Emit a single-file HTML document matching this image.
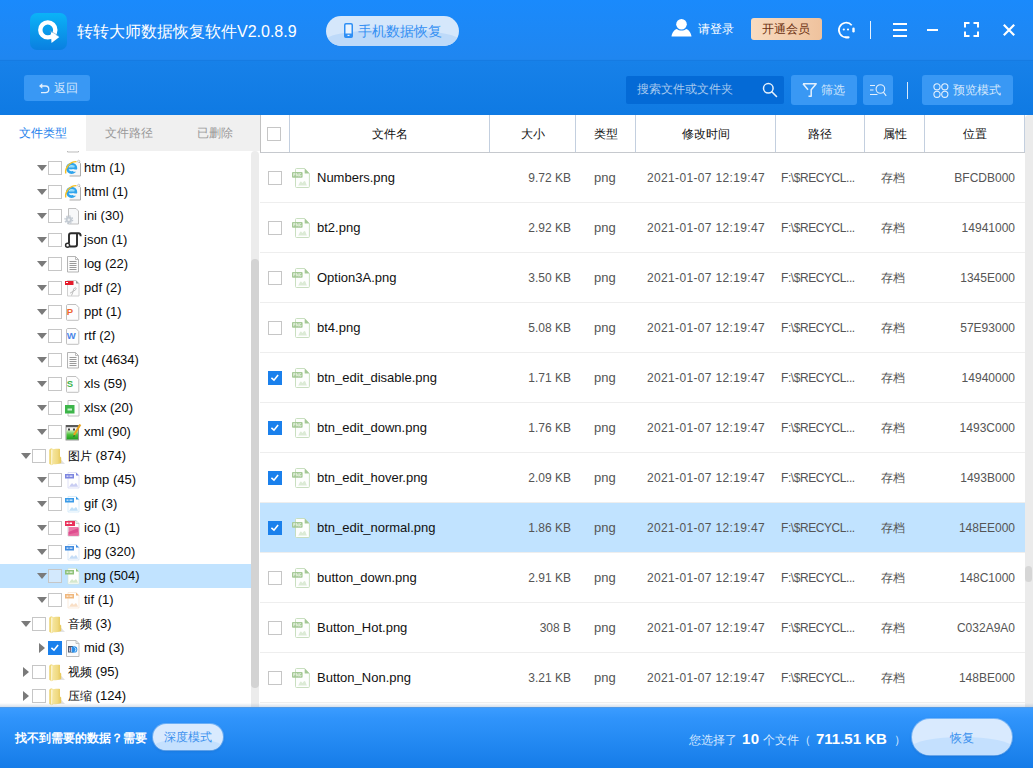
<!DOCTYPE html>
<html lang="zh">
<head>
<meta charset="utf-8">
<title>转转大师数据恢复软件</title>
<style>
*{box-sizing:border-box;margin:0;padding:0}
html,body{width:1033px;height:768px;overflow:hidden;background:#fff}
body{position:relative;font-family:"Liberation Sans",sans-serif;font-size:12px;color:#222}
svg{position:absolute;overflow:visible}
i{font-style:normal}
#hdr{position:absolute;left:0;top:0;width:1033px;height:115px;background:linear-gradient(#1a8afc 0px,#1f86f0 59px,#1781e9 61px,#0f7ae3 115px)}
#hdr .sep{position:absolute;left:0;top:60px;width:1033px;height:1px;background:#167be2}
#logo{position:absolute;left:30px;top:13px;width:37px;height:37px;border-radius:7px;background:linear-gradient(#0bb3f7,#0a7fe0)}
#title{position:absolute;left:77px;top:20px;font-size:16px;color:#fff;white-space:nowrap;line-height:24px}
#phone{position:absolute;left:326px;top:16px;width:133px;height:30px;border-radius:15px;background:#bcd9f8;color:#3590f3;font-size:14px;line-height:30px;white-space:nowrap;overflow:hidden}
#phone{background:#d5e7fb}#phone:before{content:"";position:absolute;left:0;top:14px;width:133px;height:20px;border-radius:60px 60px 0 0/10px 10px 0 0;background:#bedaf9}
#phone span{position:absolute;left:32px;top:0}
#login{position:absolute;left:698px;top:19px;font-size:12px;color:#fff;line-height:20px;white-space:nowrap}
#vip{position:absolute;left:751px;top:18px;width:71px;height:22px;border-radius:3px;background:linear-gradient(90deg,#f8dcc1,#efc29d);color:#6a2f10;font-size:12px;line-height:22px;text-align:center;white-space:nowrap;padding-right:2px}
.tbtn{position:absolute;top:75px;height:30px;border-radius:3px;background:#3998f4;color:#d3e7fc;font-size:12px;line-height:30px;white-space:nowrap}
.tbtn span{position:absolute;top:0}
#search{position:absolute;left:626px;top:76px;width:158px;height:28px;border-radius:2px;background:#046ad6;color:#a5c8ef;font-size:12px;line-height:27px;padding-left:11px;white-space:nowrap}
/* left panel */
#tabs{position:absolute;left:0;top:115px;width:260px;height:36px;background:#f0f0f0}
#tabs div{position:absolute;top:0;height:36px;line-height:36px;font-size:12px;color:#999;text-align:center;white-space:nowrap}
#tabs .on{background:#fff;color:#1e82ec}
#tree{position:absolute;left:0;top:151px;width:251px;height:556px;overflow:hidden;background:#fff}
.tr{position:absolute;left:0;width:251px;height:24px;line-height:24px;font-size:13px;color:#0a0a0a;white-space:nowrap}
.tr b{font-weight:normal;font-size:12px}
.tr.sel{background:#c1e3ff}
.tr .ar{position:absolute;top:9px;width:0;height:0;border-left:5px solid transparent;border-right:5px solid transparent;border-top:6px solid #7a7a7a}
.tr .ar.r{top:7px;border-top:5px solid transparent;border-bottom:5px solid transparent;border-left:6px solid #7a7a7a;border-right:0}
.tr .cb{position:absolute;top:5px;width:14px;height:14px;border:1px solid #c6c6c6;background:#fff}
.tr.sel .cb{background:#d3e9fd}
.tr .cb.on{background:#1a80ec;border-color:#1a80ec}
.tr .ic{position:absolute;top:3px;width:16px;height:18px}
.tr .tx{position:absolute;top:0}
#lsb{position:absolute;left:251px;top:151px;width:8px;height:556px;background:#ececec;border-radius:4px 4px 0 0}
#lsb i{position:absolute;left:0;top:108px;width:8px;height:429px;border-radius:4px;background:#d3d3d3}
/* table */
#th{position:absolute;left:260px;top:115px;width:765px;height:38px;background:#fff;border-bottom:1px solid #c6c9ce;border-left:1px solid #c2c2c2}
#th div{position:absolute;top:0;height:37px;line-height:38px;text-align:center;font-size:12px;color:#111;border-right:1px solid #c3cfdf;white-space:nowrap}
.hcb{position:absolute;left:6px;top:12px;width:14px;height:14px;border:1px solid #c6c6c6;background:#fff}
.row{position:absolute;left:260px;width:765px;height:50px;border-bottom:1px solid #eeeeee;font-size:12px;color:#555;line-height:50px;white-space:nowrap}
.row.sel{background:#c1e3ff}
.row .cb{position:absolute;left:8px;top:18px;width:14px;height:14px;border:1px solid #c6c6c6;background:#fff}
.row .cb.on{background:#1a80ec;border-color:#1a80ec}
.row .fi{position:absolute;left:32px;top:15px;width:18px;height:20px}
.row span{position:absolute;top:0}
.row .nm{left:57px;color:#111;font-size:13px}
.row .sz{right:454px}
.row .ty{left:334px;font-size:13px}
.row .tm{left:387px;letter-spacing:.35px}
.row .pa{left:521px;letter-spacing:-.43px}
.row .at{left:621px}
.row .po{right:10px}
#rsb{position:absolute;left:1025px;top:115px;width:8px;height:592px;background:#ebebeb;border-radius:4px 0 0 0}
#rsb i{position:absolute;left:0;top:451px;width:7px;height:16px;border-radius:3.500px;background:#d6d6d6}
/* footer */
#ftr{position:absolute;left:0;top:707px;width:1033px;height:61px;background:linear-gradient(#3b9cff 1px,#3094fb 11px,#2389f2 35px,#157ce8 61px)}#ftr:before{content:"";position:absolute;left:0;top:-4px;width:1033px;height:5px;background:linear-gradient(rgba(120,150,185,0),rgba(120,150,185,.38))}
#ftr .q{position:absolute;left:15px;top:21px;font-size:12px;font-weight:bold;color:#fff;line-height:20px;white-space:nowrap}
#deep{position:absolute;left:153px;top:17px;width:70px;height:26px;border-radius:13px;background:#d9eafe;box-shadow:0 0 0 1px rgba(255,255,255,.3),0 1px 3px rgba(0,60,140,.25);color:#3d92ee;font-size:12px;line-height:26px;text-align:center;white-space:nowrap;overflow:hidden}#deep:before{content:"";position:absolute;left:0;top:15px;width:70px;height:20px;border-radius:35px 35px 0 0/8px 8px 0 0;background:#c4e0fe}#deep span{position:relative}
#sel span{position:absolute;top:22px;font-size:12px;color:#d6e8ff;line-height:22px;white-space:nowrap}
#sel b{color:#fff;font-size:15px;letter-spacing:.5px}
#rec{position:absolute;left:912px;top:12px;width:100px;height:36px;border-radius:18px;background:#d9eafe;box-shadow:0 0 0 1px rgba(255,255,255,.35),0 1px 3px rgba(0,60,140,.25);color:#3d92ee;font-size:12px;line-height:38px;text-align:center;white-space:nowrap;overflow:hidden}
#rec:before{content:"";position:absolute;left:0;top:18px;width:100px;height:24px;border-radius:50px 50px 0 0/10px 10px 0 0;background:#c4e0fe}
#rec span{position:relative}
</style>
</head>
<body>
<svg width="0" height="0" style="left:0;top:0"><defs><linearGradient id="gx" x1="0" y1="0" x2="0" y2="1"><stop offset="0" stop-color="#d9f0c8"/><stop offset=".5" stop-color="#4cc23a"/><stop offset="1" stop-color="#1f9a20"/></linearGradient><linearGradient id="gf" x1="0" y1="0" x2="1" y2="0"><stop offset="0" stop-color="#f6e7a2"/><stop offset=".6" stop-color="#f0da82"/><stop offset="1" stop-color="#e6c655"/></linearGradient></defs></svg>
<div id="hdr">
  <div class="sep"></div>
  <div id="logo"><svg style="left:0;top:0" width="37" height="37" viewBox="0 0 37 37"><circle cx="17.800" cy="16.900" r="7.500" fill="none" stroke="#fff" stroke-width="4.400"/><path d="M19.800 17.700L28.300 22.700" stroke="#7fa9cc" stroke-width="1.100" opacity=".6"/><path d="M20.900 19.100L29.400 24.100 21.500 30z" fill="#fff"/></svg></div>
  <div id="title">转转大师数据恢复软件V2.0.8.9</div>
  <div id="phone"><svg style="left:18px;top:7px" width="9" height="15" viewBox="0 0 9 15"><rect x=".75" y=".75" width="7.500" height="13.500" rx="1.200" fill="#eaf3fd" stroke="#2f8ff5" stroke-width="1.500"/><rect x=".5" y="10.500" width="8" height="4" rx="1" fill="#2f8ff5"/><rect x="3.500" y="11.800" width="2" height="1.200" fill="#eaf3fd"/></svg><span>手机数据恢复</span></div>
  <svg style="left:671px;top:19px" width="21" height="18" viewBox="0 0 21 18"><circle cx="10.500" cy="5.300" r="5.300" fill="#fff"/><path d="M.5 17.500C1 13.500 3.500 10.500 6 10c2 2 7 2 9 0 2.500.5 5 3.500 5.500 7.500z" fill="#fff"/></svg>
  <div id="login">请登录</div>
  <div id="vip">开通会员</div>
  <svg style="left:837px;top:21px" width="19" height="18" viewBox="0 0 19 18"><path d="M14.700 4.200A7.300 7.300 0 1 0 9 16.300" fill="none" stroke="#fff" stroke-width="1.700"/><path d="M9 16.300h2.500" stroke="#fff" stroke-width="2.200" stroke-linecap="round"/><rect x="15.300" y="6.500" width="2.400" height="5" rx="1.200" fill="#fff"/><circle cx="6.800" cy="8.500" r="1.100" fill="#fff"/><circle cx="11" cy="8.500" r="1.100" fill="#fff"/></svg>
  <div style="position:absolute;left:870px;top:21px;width:1px;height:18px;background:#e8f2fd"></div>
  <svg style="left:893px;top:23px" width="14" height="14" viewBox="0 0 14 14"><path d="M0 1h14M0 7h14M0 13h14" stroke="#fff" stroke-width="2"/></svg>
  <div style="position:absolute;left:927px;top:29px;width:11px;height:2px;background:#fff"></div>
  <svg style="left:964px;top:22px" width="15" height="15" viewBox="0 0 15 15"><path d="M1 5.500V1h4.500M9.500 1H14v4.500M14 9.500V14H9.500M5.500 14H1V9.500" fill="none" stroke="#fff" stroke-width="2"/></svg>
  <svg style="left:1003px;top:24px" width="12" height="12" viewBox="0 0 12 12"><path d="M.8.800l10.400 10.400M11.200.800L.8 11.200" stroke="#fff" stroke-width="2.200"/></svg>

  <div class="tbtn" id="back" style="left:24px;width:66px;height:26px;line-height:26px"><svg style="left:15px;top:8px" width="11" height="11" viewBox="0 0 11 11"><path d="M1.500 3h5a3.300 3.300 0 0 1 0 6.600H2" fill="none" stroke="#e3f0fd" stroke-width="1.300"/><path d="M0 3L3.300 .3v5.400z" fill="#e3f0fd"/></svg><span style="left:30px">返回</span></div>
  <div id="search">搜索文件或文件夹<svg style="left:136px;top:6px" width="16" height="16" viewBox="0 0 16 16"><circle cx="6.300" cy="6.300" r="4.800" fill="none" stroke="#e6f1fc" stroke-width="1.500"/><path d="M9.800 9.800l4.700 4.700" stroke="#e6f1fc" stroke-width="1.600" stroke-linecap="round"/></svg></div>
  <div class="tbtn" style="left:791px;width:66px"><svg style="left:11px;top:8px" width="15" height="14" viewBox="0 0 15 14"><path d="M1 .8h13.200L9.200 6.800v6.400H6.500M1 .8l5 6" fill="none" stroke="#e3f0fd" stroke-width="1.500" stroke-linejoin="round"/></svg><span style="left:30px">筛选</span></div>
  <div class="tbtn" style="left:863px;width:30px"><svg style="left:7px;top:9px" width="17" height="13" viewBox="0 0 17 13"><path d="M0 1.500h5M0 6h3.500M0 10.500h7.500" stroke="#e3f0fd" stroke-width="1.100"/><circle cx="10.400" cy="5" r="4.300" fill="none" stroke="#e3f0fd" stroke-width="1.100"/><path d="M13.400 8.200l2.800 3.600" stroke="#e3f0fd" stroke-width="1.100"/></svg></div>
  <div style="position:absolute;left:907px;top:82px;width:1px;height:17px;background:#d8e9fb"></div>
  <div class="tbtn" style="left:922px;width:91px"><svg style="left:11px;top:8px" width="16" height="15" viewBox="0 0 16 15"><g fill="none" stroke="#e3f0fd" stroke-width="1.100"><circle cx="4" cy="3.800" r="3.100"/><circle cx="11.800" cy="3.800" r="3.100"/><circle cx="4" cy="11.300" r="3.100"/><circle cx="11.800" cy="11.300" r="3.100"/></g></svg><span style="left:31px">预览模式</span></div>
</div>
<div id="tabs">
  <div class="on" style="left:0;width:86px">文件类型</div>
  <div style="left:86px;width:86px">文件路径</div>
  <div style="left:172px;width:86px">已删除</div>
</div>
<div id="tree">
<div class="tr" style="top:-19px"><span class="ic" style="left:65px"></span><svg class="ic" style="left:65px" viewBox="0 0 16 18"><path d="M2.500 1.500H10.500l3 3V17h-11z" fill="#fcfcfc" stroke="#b4b4b4" stroke-width=".9"/><path d="M10.500 1.500v3h3" fill="none" stroke="#b4b4b4" stroke-width=".8"/></svg></div>
<div class="tr" style="top:5px"><i class="ar" style="left:37px"></i><i class="cb" style="left:48px"></i><svg class="ic" style="left:65px" viewBox="0 0 16 18"><path d="M5 2.500H13.200L15.500 4.800V17H5z" fill="#f6f6f6"/><path d="M13.200 2l2.300 2.500V17H4.500" fill="none" stroke="#a3a3a3" stroke-width=".9"/><circle cx="13.700" cy="2.300" r="1.100" fill="#fff" stroke="#aaa" stroke-width=".6"/><circle cx="6.600" cy="9.300" r="4.300" fill="#eaf7fe" stroke="#2fa4ec" stroke-width="2.700"/><rect x="2.500" y="8.300" width="9.500" height="2" fill="#2fa4ec"/><path d="M7 10.400h6v2.300H8.500z" fill="#f6f6f6"/><path d="M5 6.500h4.500v1.600H4.300z" fill="#8fdcfb"/><path d="M.7 14.500C-.2 9.500 4.500 2.300 11.500 2.600" fill="none" stroke="#f6c026" stroke-width="1.400"/></svg><span class="tx" style="left:84px">htm (1)</span></div>
<div class="tr" style="top:29px"><i class="ar" style="left:37px"></i><i class="cb" style="left:48px"></i><svg class="ic" style="left:65px" viewBox="0 0 16 18"><path d="M5 2.500H13.200L15.500 4.800V17H5z" fill="#f6f6f6"/><path d="M13.200 2l2.300 2.500V17H4.500" fill="none" stroke="#a3a3a3" stroke-width=".9"/><circle cx="13.700" cy="2.300" r="1.100" fill="#fff" stroke="#aaa" stroke-width=".6"/><circle cx="6.600" cy="9.300" r="4.300" fill="#eaf7fe" stroke="#2fa4ec" stroke-width="2.700"/><rect x="2.500" y="8.300" width="9.500" height="2" fill="#2fa4ec"/><path d="M7 10.400h6v2.300H8.500z" fill="#f6f6f6"/><path d="M5 6.500h4.500v1.600H4.300z" fill="#8fdcfb"/><path d="M.7 14.500C-.2 9.500 4.500 2.300 11.500 2.600" fill="none" stroke="#f6c026" stroke-width="1.400"/></svg><span class="tx" style="left:84px">html (1)</span></div>
<div class="tr" style="top:53px"><i class="ar" style="left:37px"></i><i class="cb" style="left:48px"></i><svg class="ic" style="left:65px" viewBox="0 0 16 18"><path d="M3.500 1.500H11l2.500 2.500V17H3.500z" fill="#f7f8f9" stroke="#b9b9b9" stroke-width=".9"/><circle cx="3.800" cy="12.800" r="3.200" fill="#c3cad2"/><circle cx="3.800" cy="12.800" r="3.900" fill="none" stroke="#c3cad2" stroke-width="1.200" stroke-dasharray="1.500 1.550"/><circle cx="3.800" cy="12.800" r="1.200" fill="#eef0f2"/></svg><span class="tx" style="left:84px">ini (30)</span></div>
<div class="tr" style="top:77px"><i class="ar" style="left:37px"></i><i class="cb" style="left:48px"></i><svg class="ic" style="left:65px" viewBox="0 0 16 18"><path d="M4 12V4.200c0-1.500 .8-2 2-2H13.500c1.800 0 2.200 1.200 2.200 3" fill="none" stroke="#2b2b2b" stroke-width="1.900"/><path d="M12 3v10.500c0 1.500-.8 2-2 2H4.500" fill="none" stroke="#2b2b2b" stroke-width="1.900"/><circle cx="2.600" cy="14.300" r="2" fill="#fff" stroke="#2b2b2b" stroke-width="1.500"/><rect x="5.200" y="4" width="5.600" height="9.500" fill="#fff"/></svg><span class="tx" style="left:84px">json (1)</span></div>
<div class="tr" style="top:101px"><i class="ar" style="left:37px"></i><i class="cb" style="left:48px"></i><svg class="ic" style="left:65px" viewBox="0 0 16 18"><path d="M2.500 1.500H10.500l3 3V17h-11z" fill="#fcfcfc" stroke="#ababab" stroke-width=".9"/><path d="M10.500 1.500v3h3" fill="none" stroke="#ababab" stroke-width=".8"/><path d="M4.500 6.500h7M4.500 8.500h7M4.500 10.500h7M4.500 12.500h7M4.500 14.500h7" stroke="#8e8e8e" stroke-width=".9"/></svg><span class="tx" style="left:84px">log (22)</span></div>
<div class="tr" style="top:125px"><i class="ar" style="left:37px"></i><i class="cb" style="left:48px"></i><svg class="ic" style="left:65px" viewBox="0 0 16 18"><path d="M2.500 1.500H11l3 3V17H2.500z" fill="#fcfcfc" stroke="#c4c4c4" stroke-width=".8"/><path d="M11 1.500l3 3h-3z" fill="#9a9a9a"/><rect x="0" y="2" width="8.500" height="4" fill="#e31b2b"/><rect x="1" y="3" width="2" height="1" fill="#fff"/><path d="M6.500 16.500c2-3.500 1.500-6.500 3-7.500s2.500 1 .5 2.200c-1.500 1-3.500 1.800-5 3" fill="none" stroke="#b5b5b5" stroke-width=".9"/></svg><span class="tx" style="left:84px">pdf (2)</span></div>
<div class="tr" style="top:149px"><i class="ar" style="left:37px"></i><i class="cb" style="left:48px"></i><svg class="ic" style="left:65px" viewBox="0 0 16 18"><path d="M1.500 3V16.500c0 .5.300 .8.800 .8H13c.5 0 .8-.3.800-.8V4.500L11 1.500H3c-1 0-1.500.5-1.500 1.500z" fill="#fdfdfd" stroke="#b9b9b9" stroke-width=".9"/><text x="1.800" y="12" font-family="Liberation Sans,sans-serif" font-weight="bold" font-size="9.500" fill="#f0642f">P</text></svg><span class="tx" style="left:84px">ppt (1)</span></div>
<div class="tr" style="top:173px"><i class="ar" style="left:37px"></i><i class="cb" style="left:48px"></i><svg class="ic" style="left:65px" viewBox="0 0 16 18"><path d="M1.500 3V16.500c0 .5.300 .8.800 .8H13c.5 0 .8-.3.800-.8V4.500L11 1.500H3c-1 0-1.500.5-1.500 1.500z" fill="#fdfdfd" stroke="#b9b9b9" stroke-width=".9"/><text x="1.800" y="12" font-family="Liberation Sans,sans-serif" font-weight="bold" font-size="9.500" fill="#4a86e8">W</text></svg><span class="tx" style="left:84px">rtf (2)</span></div>
<div class="tr" style="top:197px"><i class="ar" style="left:37px"></i><i class="cb" style="left:48px"></i><svg class="ic" style="left:65px" viewBox="0 0 16 18"><path d="M2.500 1.500H10.500l3 3V17h-11z" fill="#fcfcfc" stroke="#ababab" stroke-width=".9"/><path d="M10.500 1.500v3h3" fill="none" stroke="#ababab" stroke-width=".8"/><path d="M4.500 6.500h7M4.500 8.500h7M4.500 10.500h7M4.500 12.500h7M4.500 14.500h7" stroke="#8e8e8e" stroke-width=".9"/></svg><span class="tx" style="left:84px">txt (4634)</span></div>
<div class="tr" style="top:221px"><i class="ar" style="left:37px"></i><i class="cb" style="left:48px"></i><svg class="ic" style="left:65px" viewBox="0 0 16 18"><path d="M1.500 3V16.500c0 .5.300 .8.800 .8H13c.5 0 .8-.3.800-.8V4.500L11 1.500H3c-1 0-1.500.5-1.500 1.500z" fill="#fdfdfd" stroke="#b9b9b9" stroke-width=".9"/><text x="1.800" y="12" font-family="Liberation Sans,sans-serif" font-weight="bold" font-size="9.500" fill="#3cb44a">S</text></svg><span class="tx" style="left:84px">xls (59)</span></div>
<div class="tr" style="top:245px"><i class="ar" style="left:37px"></i><i class="cb" style="left:48px"></i><svg class="ic" style="left:65px" viewBox="0 0 16 18"><path d="M3 1.500H11l3 3V17H3z" fill="#fdfdfd" stroke="#b9b9b9" stroke-width=".9"/><rect x="0" y="6" width="9.500" height="8.500" fill="#3db54a"/><path d="M2.500 9.500h4.500v2H2.500z" fill="#c8f0cc"/></svg><span class="tx" style="left:84px">xlsx (20)</span></div>
<div class="tr" style="top:269px"><i class="ar" style="left:37px"></i><i class="cb" style="left:48px"></i><svg class="ic" style="left:65px" viewBox="0 0 16 18"><rect x="1" y="2.500" width="12.500" height="14.500" fill="#f4f4f4" stroke="#8a8a8a" stroke-width=".9"/><rect x="1.500" y="7" width="11.500" height="9.500" fill="url(#gx)"/><rect x="1" y="2" width="12.500" height="2.200" fill="#5a5a5a"/><rect x="3" y="5.500" width="2" height="2" fill="#444"/><rect x="8" y="5.500" width="2" height="2" fill="#444"/><path d="M15.300 1.500L9 12" stroke="#eaa51f" stroke-width="2.200"/><path d="M9 12l-.8 2 1.800-1z" fill="#333"/></svg><span class="tx" style="left:84px">xml (90)</span></div>
<div class="tr" style="top:293px"><i class="ar" style="left:21px"></i><i class="cb" style="left:32px"></i><svg class="ic" style="width:18px;left:48px" viewBox="0 0 18 18"><path d="M12.500 12l4.500 5H9z" fill="#cfcfcf" opacity=".6"/><path d="M1.200 2.800L3 1.200l2 .8V17.500l-1.500 .8-2.300-1.500z" fill="#efd87a"/><path d="M3.800 2.500c1-.6 7-.9 8.200-.5V9.500l1.200 1V16c-1.500 .8-6.500 1.500-8.200 1.300z" fill="url(#gf)"/><path d="M3.800 2.500v15.200" stroke="#fffbe8" stroke-width="1.100"/></svg><span class="tx" style="left:68px"><b>图片</b> (874)</span></div>
<div class="tr" style="top:317px"><i class="ar" style="left:37px"></i><i class="cb" style="left:48px"></i><svg class="ic" style="left:65px" viewBox="0 0 16 18"><path d="M3 1.500H11l3 3V17H3z" fill="#fefefe" stroke="#c9cdf2" stroke-width=".6"/><path d="M11 1.500l3 3h-3z" fill="#7d86e0"/><rect x="0" y="3" width="9" height="4.500" fill="#7d86e0"/><rect x="1.500" y="4.400" width="2" height="1.600" fill="#fff" opacity=".65"/><rect x="4.500" y="4.400" width="3" height="1.600" fill="#fff" opacity=".65"/><path d="M4 15.800c1-.5 1.500-3 3-3.500 1 .2 1 1.500 2 1.500 .8-.8 1.200-1.500 2-1.500s1.500 2.500 2 3.500z" fill="#c9cdf2"/></svg><span class="tx" style="left:84px">bmp (45)</span></div>
<div class="tr" style="top:341px"><i class="ar" style="left:37px"></i><i class="cb" style="left:48px"></i><svg class="ic" style="left:65px" viewBox="0 0 16 18"><path d="M3 1.500H11l3 3V17H3z" fill="#fefefe" stroke="#bfe0f8" stroke-width=".6"/><path d="M11 1.500l3 3h-3z" fill="#3a9be8"/><rect x="0" y="3" width="9" height="4.500" fill="#3a9be8"/><rect x="1.500" y="4.400" width="2" height="1.600" fill="#fff" opacity=".65"/><rect x="4.500" y="4.400" width="3" height="1.600" fill="#fff" opacity=".65"/><path d="M4 15.800c1-.5 1.500-3 3-3.500 1 .2 1 1.500 2 1.500 .8-.8 1.200-1.500 2-1.500s1.500 2.500 2 3.500z" fill="#bfe0f8"/></svg><span class="tx" style="left:84px">gif (3)</span></div>
<div class="tr" style="top:365px"><i class="ar" style="left:37px"></i><i class="cb" style="left:48px"></i><svg class="ic" style="left:65px" viewBox="0 0 16 18"><path d="M3 1.500H11l3 3V17H3z" fill="#fdfdfd" stroke="#c8c8c8" stroke-width=".8"/><path d="M11 1.500v3h3" fill="none" stroke="#bbb" stroke-width=".7"/><rect x="0" y="2" width="10" height="5" fill="#e9305a"/><rect x="1.500" y="3.500" width="2" height="1.500" fill="#fff"/><rect x="4.500" y="3.500" width="2.500" height="1.500" fill="#fff"/><path d="M3.500 8h10v8.500h-10z" fill="#ec7aa8"/><path d="M3.500 13l10-4V16.500h-10z" fill="#de4e8f"/><path d="M3.500 15.500l10-2.500v3.500h-10z" fill="#e86ba0"/></svg><span class="tx" style="left:84px">ico (1)</span></div>
<div class="tr" style="top:389px"><i class="ar" style="left:37px"></i><i class="cb" style="left:48px"></i><svg class="ic" style="left:65px" viewBox="0 0 16 18"><path d="M3 1.500H11l3 3V17H3z" fill="#fefefe" stroke="#c4dcf6" stroke-width=".6"/><path d="M11 1.500l3 3h-3z" fill="#3f8be0"/><rect x="0" y="3" width="9" height="4.500" fill="#3f8be0"/><rect x="1.500" y="4.400" width="2" height="1.600" fill="#fff" opacity=".65"/><rect x="4.500" y="4.400" width="3" height="1.600" fill="#fff" opacity=".65"/><path d="M4 15.800c1-.5 1.500-3 3-3.500 1 .2 1 1.500 2 1.500 .8-.8 1.200-1.500 2-1.500s1.500 2.500 2 3.500z" fill="#c4dcf6"/></svg><span class="tx" style="left:84px">jpg (320)</span></div>
<div class="tr sel" style="top:413px"><i class="ar" style="left:37px"></i><i class="cb" style="left:48px"></i><svg class="ic" style="left:65px" viewBox="0 0 16 18"><path d="M3 1.500H11l3 3V17H3z" fill="#fefefe" stroke="#d5e8cd" stroke-width=".6"/><path d="M11 1.500l3 3h-3z" fill="#8fc27a"/><rect x="0" y="3" width="9" height="4.500" fill="#8fc27a"/><rect x="1.500" y="4.400" width="2" height="1.600" fill="#fff" opacity=".65"/><rect x="4.500" y="4.400" width="3" height="1.600" fill="#fff" opacity=".65"/><path d="M4 15.800c1-.5 1.500-3 3-3.500 1 .2 1 1.500 2 1.500 .8-.8 1.200-1.500 2-1.500s1.500 2.500 2 3.500z" fill="#d5e8cd"/></svg><span class="tx" style="left:84px">png (504)</span></div>
<div class="tr" style="top:437px"><i class="ar" style="left:37px"></i><i class="cb" style="left:48px"></i><svg class="ic" style="left:65px" viewBox="0 0 16 18"><path d="M3 1.500H11l3 3V17H3z" fill="#fefefe" stroke="#f9dfc6" stroke-width=".6"/><path d="M11 1.500l3 3h-3z" fill="#f0b77c"/><rect x="0" y="3" width="9" height="4.500" fill="#f0b77c"/><rect x="1.500" y="4.400" width="2" height="1.600" fill="#fff" opacity=".65"/><rect x="4.500" y="4.400" width="3" height="1.600" fill="#fff" opacity=".65"/><path d="M4 15.800c1-.5 1.500-3 3-3.500 1 .2 1 1.500 2 1.500 .8-.8 1.200-1.500 2-1.500s1.500 2.500 2 3.500z" fill="#f9dfc6"/></svg><span class="tx" style="left:84px">tif (1)</span></div>
<div class="tr" style="top:461px"><i class="ar" style="left:21px"></i><i class="cb" style="left:32px"></i><svg class="ic" style="width:18px;left:48px" viewBox="0 0 18 18"><path d="M12.500 12l4.500 5H9z" fill="#cfcfcf" opacity=".6"/><path d="M1.200 2.800L3 1.200l2 .8V17.500l-1.500 .8-2.300-1.500z" fill="#efd87a"/><path d="M3.800 2.500c1-.6 7-.9 8.200-.5V9.500l1.200 1V16c-1.500 .8-6.500 1.500-8.200 1.300z" fill="url(#gf)"/><path d="M3.800 2.500v15.200" stroke="#fffbe8" stroke-width="1.100"/></svg><span class="tx" style="left:68px"><b>音频</b> (3)</span></div>
<div class="tr" style="top:485px"><i class="ar r" style="left:39px"></i><i class="cb on" style="left:48px"><svg viewBox="0 0 14 14" style="left:-1px;top:-1px;width:14px;height:14px"><path d="M3.400 6.900l2.600 2.300 4.100-5.100" fill="none" stroke="#fff" stroke-width="1.600"/></svg></i><svg class="ic" style="left:65px" viewBox="0 0 16 18"><path d="M1.500 1.500H11l3 3V17.500H1.500z" fill="#fbfbfb" stroke="#b5b5b5" stroke-width=".9"/><path d="M11 1.500v3h3" fill="none" stroke="#b5b5b5" stroke-width=".8"/><rect x="3" y="7" width="5" height="6.500" fill="#4d586d"/><circle cx="9" cy="10.500" r="3.300" fill="#2b8fe8"/><path d="M9.500 8.500a2.500 2.500 0 0 1 0 4.500" fill="none" stroke="#fff" stroke-width=".8"/><path d="M4.500 8.500v4M6.300 8v5" stroke="#e8eefc" stroke-width=".8"/><circle cx="5.300" cy="10" r=".7" fill="#e33"/></svg><span class="tx" style="left:84px">mid (3)</span></div>
<div class="tr" style="top:509px"><i class="ar r" style="left:23px"></i><i class="cb" style="left:32px"></i><svg class="ic" style="width:18px;left:48px" viewBox="0 0 18 18"><path d="M12.500 12l4.500 5H9z" fill="#cfcfcf" opacity=".6"/><path d="M1.200 2.800L3 1.200l2 .8V17.500l-1.500 .8-2.300-1.500z" fill="#efd87a"/><path d="M3.800 2.500c1-.6 7-.9 8.200-.5V9.500l1.200 1V16c-1.500 .8-6.500 1.500-8.200 1.300z" fill="url(#gf)"/><path d="M3.800 2.500v15.200" stroke="#fffbe8" stroke-width="1.100"/></svg><span class="tx" style="left:68px"><b>视频</b> (95)</span></div>
<div class="tr" style="top:533px"><i class="ar r" style="left:23px"></i><i class="cb" style="left:32px"></i><svg class="ic" style="width:18px;left:48px" viewBox="0 0 18 18"><path d="M12.500 12l4.500 5H9z" fill="#cfcfcf" opacity=".6"/><path d="M1.200 2.800L3 1.200l2 .8V17.500l-1.500 .8-2.300-1.500z" fill="#efd87a"/><path d="M3.800 2.500c1-.6 7-.9 8.200-.5V9.500l1.200 1V16c-1.500 .8-6.500 1.500-8.200 1.300z" fill="url(#gf)"/><path d="M3.800 2.500v15.200" stroke="#fffbe8" stroke-width="1.100"/></svg><span class="tx" style="left:68px"><b>压缩</b> (124)</span></div>
</div>
<div id="lsb"><i></i></div>
<div id="th"><div style="left:0px;width:29px"><i class="hcb"></i></div><div style="left:29px;width:200px">文件名</div><div style="left:229px;width:86px">大小</div><div style="left:315px;width:60px">类型</div><div style="left:375px;width:140px">修改时间</div><div style="left:515px;width:89px">路径</div><div style="left:604px;width:60px">属性</div><div style="left:664px;width:100px">位置</div></div>
<div id="rows">
<div class="row" style="top:153px"><i class="cb"></i><svg class="fi" viewBox="0 0 18 20"><path d="M4.500 .5H12.700L17.400 5.500V18.500a1 1 0 0 1-1 1H4.500a1 1 0 0 1-1-1V1.500a1 1 0 0 1 1-1z" fill="#fdfefd" stroke="#c3dbb9" stroke-width=".9"/><path d="M12.700 .5l4.700 5H12.700z" fill="#a5c996"/><rect x="0" y="3.900" width="10.600" height="5.800" rx="1" fill="#a5c996"/><path d="M1.700 8.300V5.300h1.200v1.500H1.700M4.400 8.300V5.300l1.800 3V5.300M9 5.600H7.600v2.500H9V7" stroke="#eef6ea" stroke-width=".75" fill="none"/><path d="M6 17.500c1-.3 1.500-3.500 2.800-4 1 .2 1 1.500 1.800 1.500 .8-.8 1-2 2-2s1.700 3.500 2.400 4.500z" fill="#dcebd6"/></svg><span class="nm">Numbers.png</span><span class="sz">9.72 KB</span><span class="ty">png</span><span class="tm">2021-01-07 12:19:47</span><span class="pa">F:\$RECYCL...</span><span class="at">存档</span><span class="po">BFCDB000</span></div>
<div class="row" style="top:203px"><i class="cb"></i><svg class="fi" viewBox="0 0 18 20"><path d="M4.500 .5H12.700L17.400 5.500V18.500a1 1 0 0 1-1 1H4.500a1 1 0 0 1-1-1V1.500a1 1 0 0 1 1-1z" fill="#fdfefd" stroke="#c3dbb9" stroke-width=".9"/><path d="M12.700 .5l4.700 5H12.700z" fill="#a5c996"/><rect x="0" y="3.900" width="10.600" height="5.800" rx="1" fill="#a5c996"/><path d="M1.700 8.300V5.300h1.200v1.500H1.700M4.400 8.300V5.300l1.800 3V5.300M9 5.600H7.600v2.500H9V7" stroke="#eef6ea" stroke-width=".75" fill="none"/><path d="M6 17.500c1-.3 1.500-3.500 2.800-4 1 .2 1 1.500 1.800 1.500 .8-.8 1-2 2-2s1.700 3.500 2.400 4.500z" fill="#dcebd6"/></svg><span class="nm">bt2.png</span><span class="sz">2.92 KB</span><span class="ty">png</span><span class="tm">2021-01-07 12:19:47</span><span class="pa">F:\$RECYCL...</span><span class="at">存档</span><span class="po">14941000</span></div>
<div class="row" style="top:253px"><i class="cb"></i><svg class="fi" viewBox="0 0 18 20"><path d="M4.500 .5H12.700L17.400 5.500V18.500a1 1 0 0 1-1 1H4.500a1 1 0 0 1-1-1V1.500a1 1 0 0 1 1-1z" fill="#fdfefd" stroke="#c3dbb9" stroke-width=".9"/><path d="M12.700 .5l4.700 5H12.700z" fill="#a5c996"/><rect x="0" y="3.900" width="10.600" height="5.800" rx="1" fill="#a5c996"/><path d="M1.700 8.300V5.300h1.200v1.500H1.700M4.400 8.300V5.300l1.800 3V5.300M9 5.600H7.600v2.500H9V7" stroke="#eef6ea" stroke-width=".75" fill="none"/><path d="M6 17.500c1-.3 1.500-3.500 2.800-4 1 .2 1 1.500 1.800 1.500 .8-.8 1-2 2-2s1.700 3.500 2.400 4.500z" fill="#dcebd6"/></svg><span class="nm">Option3A.png</span><span class="sz">3.50 KB</span><span class="ty">png</span><span class="tm">2021-01-07 12:19:47</span><span class="pa">F:\$RECYCL...</span><span class="at">存档</span><span class="po">1345E000</span></div>
<div class="row" style="top:303px"><i class="cb"></i><svg class="fi" viewBox="0 0 18 20"><path d="M4.500 .5H12.700L17.400 5.500V18.500a1 1 0 0 1-1 1H4.500a1 1 0 0 1-1-1V1.500a1 1 0 0 1 1-1z" fill="#fdfefd" stroke="#c3dbb9" stroke-width=".9"/><path d="M12.700 .5l4.700 5H12.700z" fill="#a5c996"/><rect x="0" y="3.900" width="10.600" height="5.800" rx="1" fill="#a5c996"/><path d="M1.700 8.300V5.300h1.200v1.500H1.700M4.400 8.300V5.300l1.800 3V5.300M9 5.600H7.600v2.500H9V7" stroke="#eef6ea" stroke-width=".75" fill="none"/><path d="M6 17.500c1-.3 1.500-3.500 2.800-4 1 .2 1 1.500 1.800 1.500 .8-.8 1-2 2-2s1.700 3.500 2.400 4.500z" fill="#dcebd6"/></svg><span class="nm">bt4.png</span><span class="sz">5.08 KB</span><span class="ty">png</span><span class="tm">2021-01-07 12:19:47</span><span class="pa">F:\$RECYCL...</span><span class="at">存档</span><span class="po">57E93000</span></div>
<div class="row" style="top:353px"><i class="cb on"><svg viewBox="0 0 14 14" style="left:-1px;top:-1px;width:14px;height:14px"><path d="M3.400 6.900l2.600 2.300 4.100-5.100" fill="none" stroke="#fff" stroke-width="1.600"/></svg></i><svg class="fi" viewBox="0 0 18 20"><path d="M4.500 .5H12.700L17.400 5.500V18.500a1 1 0 0 1-1 1H4.500a1 1 0 0 1-1-1V1.500a1 1 0 0 1 1-1z" fill="#fdfefd" stroke="#c3dbb9" stroke-width=".9"/><path d="M12.700 .5l4.700 5H12.700z" fill="#a5c996"/><rect x="0" y="3.900" width="10.600" height="5.800" rx="1" fill="#a5c996"/><path d="M1.700 8.300V5.300h1.200v1.500H1.700M4.400 8.300V5.300l1.800 3V5.300M9 5.600H7.600v2.500H9V7" stroke="#eef6ea" stroke-width=".75" fill="none"/><path d="M6 17.500c1-.3 1.500-3.500 2.800-4 1 .2 1 1.500 1.800 1.500 .8-.8 1-2 2-2s1.700 3.500 2.400 4.500z" fill="#dcebd6"/></svg><span class="nm">btn_edit_disable.png</span><span class="sz">1.71 KB</span><span class="ty">png</span><span class="tm">2021-01-07 12:19:47</span><span class="pa">F:\$RECYCL...</span><span class="at">存档</span><span class="po">14940000</span></div>
<div class="row" style="top:403px"><i class="cb on"><svg viewBox="0 0 14 14" style="left:-1px;top:-1px;width:14px;height:14px"><path d="M3.400 6.900l2.600 2.300 4.100-5.100" fill="none" stroke="#fff" stroke-width="1.600"/></svg></i><svg class="fi" viewBox="0 0 18 20"><path d="M4.500 .5H12.700L17.400 5.500V18.500a1 1 0 0 1-1 1H4.500a1 1 0 0 1-1-1V1.500a1 1 0 0 1 1-1z" fill="#fdfefd" stroke="#c3dbb9" stroke-width=".9"/><path d="M12.700 .5l4.700 5H12.700z" fill="#a5c996"/><rect x="0" y="3.900" width="10.600" height="5.800" rx="1" fill="#a5c996"/><path d="M1.700 8.300V5.300h1.200v1.500H1.700M4.400 8.300V5.300l1.800 3V5.300M9 5.600H7.600v2.500H9V7" stroke="#eef6ea" stroke-width=".75" fill="none"/><path d="M6 17.500c1-.3 1.500-3.500 2.800-4 1 .2 1 1.500 1.800 1.500 .8-.8 1-2 2-2s1.700 3.500 2.400 4.500z" fill="#dcebd6"/></svg><span class="nm">btn_edit_down.png</span><span class="sz">1.76 KB</span><span class="ty">png</span><span class="tm">2021-01-07 12:19:47</span><span class="pa">F:\$RECYCL...</span><span class="at">存档</span><span class="po">1493C000</span></div>
<div class="row" style="top:453px"><i class="cb on"><svg viewBox="0 0 14 14" style="left:-1px;top:-1px;width:14px;height:14px"><path d="M3.400 6.900l2.600 2.300 4.100-5.100" fill="none" stroke="#fff" stroke-width="1.600"/></svg></i><svg class="fi" viewBox="0 0 18 20"><path d="M4.500 .5H12.700L17.400 5.500V18.500a1 1 0 0 1-1 1H4.500a1 1 0 0 1-1-1V1.500a1 1 0 0 1 1-1z" fill="#fdfefd" stroke="#c3dbb9" stroke-width=".9"/><path d="M12.700 .5l4.700 5H12.700z" fill="#a5c996"/><rect x="0" y="3.900" width="10.600" height="5.800" rx="1" fill="#a5c996"/><path d="M1.700 8.300V5.300h1.200v1.500H1.700M4.400 8.300V5.300l1.800 3V5.300M9 5.600H7.600v2.500H9V7" stroke="#eef6ea" stroke-width=".75" fill="none"/><path d="M6 17.500c1-.3 1.500-3.500 2.800-4 1 .2 1 1.500 1.800 1.500 .8-.8 1-2 2-2s1.700 3.500 2.400 4.500z" fill="#dcebd6"/></svg><span class="nm">btn_edit_hover.png</span><span class="sz">2.09 KB</span><span class="ty">png</span><span class="tm">2021-01-07 12:19:47</span><span class="pa">F:\$RECYCL...</span><span class="at">存档</span><span class="po">1493B000</span></div>
<div class="row sel" style="top:503px"><i class="cb on"><svg viewBox="0 0 14 14" style="left:-1px;top:-1px;width:14px;height:14px"><path d="M3.400 6.900l2.600 2.300 4.100-5.100" fill="none" stroke="#fff" stroke-width="1.600"/></svg></i><svg class="fi" viewBox="0 0 18 20"><path d="M4.500 .5H12.700L17.400 5.500V18.500a1 1 0 0 1-1 1H4.500a1 1 0 0 1-1-1V1.500a1 1 0 0 1 1-1z" fill="#fdfefd" stroke="#c3dbb9" stroke-width=".9"/><path d="M12.700 .5l4.700 5H12.700z" fill="#a5c996"/><rect x="0" y="3.900" width="10.600" height="5.800" rx="1" fill="#a5c996"/><path d="M1.700 8.300V5.300h1.200v1.500H1.700M4.400 8.300V5.300l1.800 3V5.300M9 5.600H7.600v2.500H9V7" stroke="#eef6ea" stroke-width=".75" fill="none"/><path d="M6 17.500c1-.3 1.500-3.500 2.800-4 1 .2 1 1.500 1.800 1.500 .8-.8 1-2 2-2s1.700 3.500 2.400 4.500z" fill="#dcebd6"/></svg><span class="nm">btn_edit_normal.png</span><span class="sz">1.86 KB</span><span class="ty">png</span><span class="tm">2021-01-07 12:19:47</span><span class="pa">F:\$RECYCL...</span><span class="at">存档</span><span class="po">148EE000</span></div>
<div class="row" style="top:553px"><i class="cb"></i><svg class="fi" viewBox="0 0 18 20"><path d="M4.500 .5H12.700L17.400 5.500V18.500a1 1 0 0 1-1 1H4.500a1 1 0 0 1-1-1V1.500a1 1 0 0 1 1-1z" fill="#fdfefd" stroke="#c3dbb9" stroke-width=".9"/><path d="M12.700 .5l4.700 5H12.700z" fill="#a5c996"/><rect x="0" y="3.900" width="10.600" height="5.800" rx="1" fill="#a5c996"/><path d="M1.700 8.300V5.300h1.200v1.500H1.700M4.400 8.300V5.300l1.800 3V5.300M9 5.600H7.600v2.500H9V7" stroke="#eef6ea" stroke-width=".75" fill="none"/><path d="M6 17.500c1-.3 1.500-3.500 2.800-4 1 .2 1 1.500 1.800 1.500 .8-.8 1-2 2-2s1.700 3.500 2.400 4.500z" fill="#dcebd6"/></svg><span class="nm">button_down.png</span><span class="sz">2.91 KB</span><span class="ty">png</span><span class="tm">2021-01-07 12:19:47</span><span class="pa">F:\$RECYCL...</span><span class="at">存档</span><span class="po">148C1000</span></div>
<div class="row" style="top:603px"><i class="cb"></i><svg class="fi" viewBox="0 0 18 20"><path d="M4.500 .5H12.700L17.400 5.500V18.500a1 1 0 0 1-1 1H4.500a1 1 0 0 1-1-1V1.500a1 1 0 0 1 1-1z" fill="#fdfefd" stroke="#c3dbb9" stroke-width=".9"/><path d="M12.700 .5l4.700 5H12.700z" fill="#a5c996"/><rect x="0" y="3.900" width="10.600" height="5.800" rx="1" fill="#a5c996"/><path d="M1.700 8.300V5.300h1.200v1.500H1.700M4.400 8.300V5.300l1.800 3V5.300M9 5.600H7.600v2.500H9V7" stroke="#eef6ea" stroke-width=".75" fill="none"/><path d="M6 17.500c1-.3 1.500-3.500 2.800-4 1 .2 1 1.500 1.800 1.500 .8-.8 1-2 2-2s1.700 3.500 2.400 4.500z" fill="#dcebd6"/></svg><span class="nm">Button_Hot.png</span><span class="sz">308 B</span><span class="ty">png</span><span class="tm">2021-01-07 12:19:47</span><span class="pa">F:\$RECYCL...</span><span class="at">存档</span><span class="po">C032A9A0</span></div>
<div class="row" style="top:653px"><i class="cb"></i><svg class="fi" viewBox="0 0 18 20"><path d="M4.500 .5H12.700L17.400 5.500V18.500a1 1 0 0 1-1 1H4.500a1 1 0 0 1-1-1V1.500a1 1 0 0 1 1-1z" fill="#fdfefd" stroke="#c3dbb9" stroke-width=".9"/><path d="M12.700 .5l4.700 5H12.700z" fill="#a5c996"/><rect x="0" y="3.900" width="10.600" height="5.800" rx="1" fill="#a5c996"/><path d="M1.700 8.300V5.300h1.200v1.500H1.700M4.400 8.300V5.300l1.800 3V5.300M9 5.600H7.600v2.500H9V7" stroke="#eef6ea" stroke-width=".75" fill="none"/><path d="M6 17.500c1-.3 1.500-3.500 2.800-4 1 .2 1 1.500 1.800 1.500 .8-.8 1-2 2-2s1.700 3.500 2.400 4.500z" fill="#dcebd6"/></svg><span class="nm">Button_Non.png</span><span class="sz">3.21 KB</span><span class="ty">png</span><span class="tm">2021-01-07 12:19:47</span><span class="pa">F:\$RECYCL...</span><span class="at">存档</span><span class="po">148BE000</span></div>
</div>
<div id="rsb"><i></i></div>
<div id="ftr">
  <div class="q">找不到需要的数据？需要</div>
  <div id="deep"><span>深度模式</span></div>
  <div id="sel"><span style="left:689px">您选择了</span><span style="left:742px;top:21px"><b>10</b></span><span style="left:763px">个文件（</span><span style="left:816px;top:21px"><b style="letter-spacing:0">711.51 KB</b></span><span style="left:894px">）</span></div>
  <div id="rec"><span>恢复</span></div>
</div>
</body>
</html>
